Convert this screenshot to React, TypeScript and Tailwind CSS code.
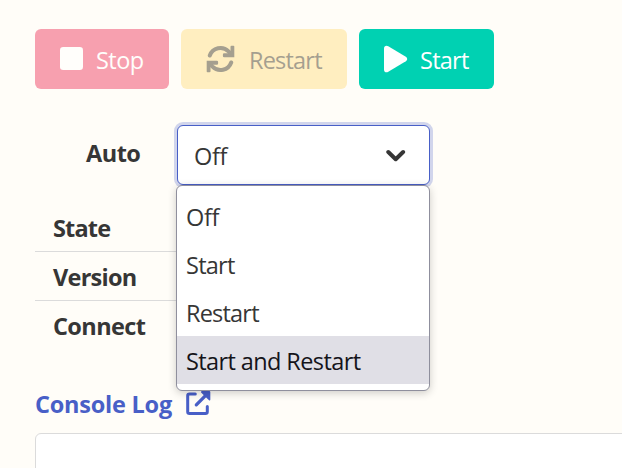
import type { ReactNode } from "react";

function StopIcon() {
  return (
    <svg className="h-6 w-6" viewBox="0 0 24 24" fill="currentColor">
      <rect x="0" y="0" width="23" height="23" rx="3.2" />
    </svg>
  );
}

function RestartIcon() {
  return (
    <svg className="h-7 w-[29px]" viewBox="0 0 29 28" fill="none" stroke="currentColor" strokeWidth="4">
      <path d="M3.8 10.5A11.3 11.3 0 0 1 22.5 6.3L25 9" strokeLinecap="round" />
      <path d="M25.2 17.5A11.3 11.3 0 0 1 6.5 21.7L4 19" strokeLinecap="round" />
      <path fill="currentColor" stroke="none" d="M25.5.800h2q.8 0 .8.800V12.200H18.200q-1.300 0-1.300-1.300V9.500q0-1.200 1.200-1.200h3.900L24.500 6V1.800q0-1 1-1Z" />
      <path fill="currentColor" stroke="none" d="M3.500 27.200H1.500q-.8 0-.8-.8V15.800H10.800q1.300 0 1.300 1.300V18.500q0 1.200-1.200 1.200H7L4.500 22V26.200q0 1-1 1Z" />
    </svg>
  );
}

function PlayIcon() {
  return (
    <svg className="h-7 w-6" viewBox="0 0 24 28" fill="currentColor">
      <path d="M0 3.3C0 .9 2.2 0 4.3 1.2L21.800 11.700C23.700 12.900 23.700 15.100 21.800 16.300L4.300 26.800C2.200 28 0 27.100 0 24.700Z" />
    </svg>
  );
}

function ExternalIcon() {
  return (
    <svg className="h-[25px] w-[25px]" viewBox="0 0 25 25" fill="none" stroke="currentColor" strokeWidth="3" strokeLinecap="round" strokeLinejoin="round">
      <path d="M9.300 3H3.500Q1.700 3 1.700 4.800V20.700Q1.700 22.500 3.500 22.500H19.500Q21.300 22.500 21.300 20.700V15.500" />
      <path d="M10.300 13.800L19 5.100" strokeWidth="3.3" />
      <path d="M15.800 0H23.300Q24.300 0 24.300 1V8.600Q24.200 10.100 23 9.200L15.100 1.500Q14.700.2 15.800 0Z" fill="currentColor" stroke="none" />
    </svg>
  );
}

function Button({ className, icon, children }: { className: string; icon: ReactNode; children: ReactNode }) {
  return (
    <button className={`flex h-[60px] items-center rounded-md pl-[25px] text-left ${className}`}>
      {icon}
      {children}
    </button>
  );
}

const options = [
  { label: "Off", style: "tracking-[-0.4px]" },
  { label: "Start", style: "tracking-[-0.75px]" },
  { label: "Restart", style: "tracking-[-0.8px]" },
  { label: "Start and Restart", style: "tracking-[-0.6px] bg-[#e0dfe6] text-[#15141a]" },
];

const rows = [
  { label: "State", style: "tracking-[-0.85px]" },
  { label: "Version", style: "tracking-[-0.75px]" },
  { label: "Connect", style: "tracking-[-0.6px]" },
];

export default function App() {
  return (
    <main className="h-[468px] w-[622px] overflow-hidden bg-[#fffdf8] pl-[35px] pt-[29px] font-['Open_Sans',sans-serif] text-[23.5px] leading-9 text-[#363636]">
      <div className="flex gap-3">
        <Button className="w-[134px] bg-[#f14668] text-white opacity-50" icon={<StopIcon />}>
          <span className="ml-3 mt-0.5 tracking-[-0.55px]">Stop</span>
        </Button>
        <Button className="w-[166px] bg-[#ffe08a] text-[#4d4329] opacity-50" icon={<RestartIcon />}>
          <span className="ml-3.5 mt-0.5 tracking-[-0.8px]">Restart</span>
        </Button>
        <Button className="w-[135px] bg-[#00d1b2] text-white" icon={<PlayIcon />}>
          <span className="ml-3 mt-0.5 tracking-[-0.75px]">Start</span>
        </Button>
      </div>

      <div className="mt-9 flex h-[60px]">
        <label className="w-[142px] pl-[51px] pt-2.5 font-bold tracking-[-0.5px]">Auto</label>
        <div className="relative w-[253px]">
          <div className="flex h-[60px] items-center justify-between rounded-md border border-[#485fc7] bg-white pl-4 pr-[23px] shadow-[0_0_0_3px_rgba(72,95,199,0.25)]">
            <span className="mt-px tracking-[-0.3px]">Off</span>
            <svg className="h-4 w-5" viewBox="0 0 20 16" fill="none" stroke="currentColor" strokeWidth="4" strokeLinecap="round" strokeLinejoin="round">
              <path d="M2.300 5L9.700 12.200L17.100 5" />
            </svg>
          </div>
          <ul className="absolute -left-px top-[60px] h-[206px] w-[254px] rounded-md border border-[#8f8f9d] bg-white pt-1.5 shadow-[0_2px_8px_rgba(0,0,0,0.2)]">
            {options.map((o) => (
              <li key={o.label} className={`h-12 pl-[9px] pt-[7px] ${o.style}`}>{o.label}</li>
            ))}
          </ul>
        </div>
      </div>

      <div className="mt-[18px] w-[395px]">
        {rows.map((r) => (
          <div key={r.label} className={`h-[49px] border-b border-[#dbdbdb] pl-[18px] pt-[7px] font-bold last:border-b-0 ${r.style}`}>{r.label}</div>
        ))}
      </div>

      <div className="mt-9 flex h-9 text-[#485fc7]">
        <span className="w-[151px] whitespace-nowrap font-bold tracking-[-0.23px]">Console Log</span>
        <div className="mt-[5px]"><ExternalIcon /></div>
      </div>
      <div className="mt-[11px] h-20 w-[650px] rounded-md border border-[#dbdbdb] bg-white" />
    </main>
  );
}
